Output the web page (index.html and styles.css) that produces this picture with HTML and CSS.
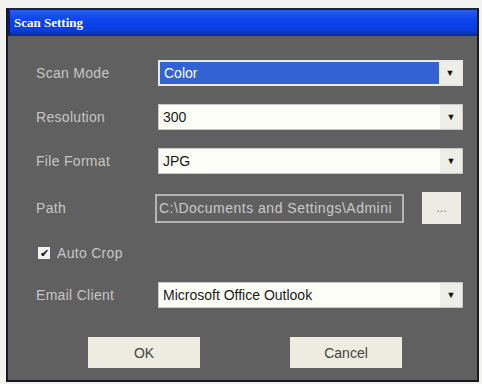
FILE: index.html
```html
<!DOCTYPE html>
<html lang="en">
<head>
  <meta charset="UTF-8" />
  <title>Scan Setting</title>
  <link rel="stylesheet" href="styles.css">
</head>
<body>
  <div class="window">
    <div class="titlebar">Scan Setting</div>
    <div class="form">
      <div class="row">
        <span class="label">Scan Mode</span>
        <div class="combo selected"><span class="value">Color</span><span class="arrow">&#9660;</span></div>
      </div>
      <div class="row">
        <span class="label">Resolution</span>
        <div class="combo"><span class="value">300</span><span class="arrow">&#9660;</span></div>
      </div>
      <div class="row">
        <span class="label">File Format</span>
        <div class="combo"><span class="value">JPG</span><span class="arrow">&#9660;</span></div>
      </div>
      <div class="row path-row">
        <span class="label">Path</span>
        <div class="path">C:\Documents and Settings\Admini</div>
        <button class="browse">...</button>
      </div>
      <div class="row check-row">
        <span class="check">&#10004;</span>
        <span class="label">Auto Crop</span>
      </div>
      <div class="row">
        <span class="label">Email Client</span>
        <div class="combo"><span class="value">Microsoft Office Outlook</span><span class="arrow">&#9660;</span></div>
      </div>
      <div class="buttons">
        <button class="btn">OK</button>
        <button class="btn">Cancel</button>
      </div>
    </div>
  </div>
</body>
</html>
```

FILE: styles.css
```css
body {
  margin: 0;
  background: #f2f2f0;
  font-family: "Liberation Sans", Arial, sans-serif;
}
.window {
  margin: 8px 0 0 6px;
  width: 473px;
  height: 374px;
  box-sizing: border-box;
  background: #606060;
  border: 2px solid #18181e;
  border-top-color: #20243a;
}
.titlebar {
  height: 26px;
  line-height: 25px;
  padding-left: 4px;
  background: linear-gradient(#2a5cf0, #0b44ee 40%, #0a3ddc 80%, #0a2c8c);
  color: #fff;
  font-family: "Liberation Serif", serif;
  font-weight: bold;
  font-size: 13px;
  border-left: 2px solid #0a1e70;
}
.form {
  display: flex;
  flex-direction: column;
  gap: 18px;
  padding: 24px 0 0 28px;
}
.row {
  display: flex;
  align-items: center;
  height: 26px;
}
.label {
  width: 122px;
  color: #c6c6c6;
  font-size: 14px;
  letter-spacing: 0.3px;
}
.combo {
  display: flex;
  width: 305px;
  height: 26px;
  box-sizing: border-box;
  background: #fdfdf8;
  border: 1px solid #c8c8c8;
}
.combo .value {
  flex: 1;
  padding-left: 4px;
  line-height: 24px;
  font-size: 14px;
  color: #1a1a1a;
}
.combo .arrow {
  width: 22px;
  text-align: center;
  line-height: 24px;
  font-size: 9px;
  color: #111;
  background: #eeeee8;
}
.combo.selected {
  border: 2px solid #e8e8e8;
}
.combo.selected .value {
  background: #3362d2;
  color: #fff;
  line-height: 22px;
}
.combo.selected .arrow {
  line-height: 22px;
}
.path-row {
  height: 32px;
}
.path-row .label {
  width: 119px;
}
.path {
  width: 249px;
  height: 29px;
  box-sizing: border-box;
  border: 2px solid #b4b4b4;
  padding-left: 2px;
  line-height: 25px;
  font-size: 14px;
  letter-spacing: 0.5px;
  color: #cacaca;
  white-space: nowrap;
  overflow: hidden;
}
.browse {
  margin-left: 18px;
  width: 39px;
  height: 32px;
  border: 0;
  background: #ecece4;
  color: #777;
  font-size: 12px;
}
.check-row {
  height: 22px;
}
.check {
  width: 12px;
  height: 12px;
  margin: 0 7px 0 2px;
  background: #f2f2f2;
  color: #111;
  font-size: 11px;
  line-height: 12px;
  text-align: center;
}
.buttons {
  display: flex;
  gap: 90px;
  margin: 11px 0 0 52px;
}
.btn {
  width: 112px;
  height: 31px;
  border: 0;
  background: #ecece0;
  color: #444;
  font-family: "Liberation Sans", Arial, sans-serif;
  font-size: 14px;
}
```
